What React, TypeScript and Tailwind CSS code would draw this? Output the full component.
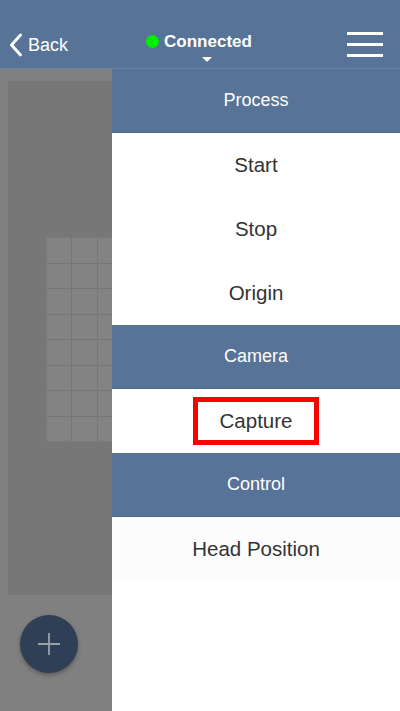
import React from 'react';

type Row = { label: string; kind: 'header' | 'item'; boxed?: boolean };

const rows: Row[] = [
  { label: 'Process', kind: 'header' },
  { label: 'Start', kind: 'item' },
  { label: 'Stop', kind: 'item' },
  { label: 'Origin', kind: 'item' },
  { label: 'Camera', kind: 'header' },
  { label: 'Capture', kind: 'item', boxed: true },
  { label: 'Control', kind: 'header' },
  { label: 'Head Position', kind: 'item' },
];

const font = { fontFamily: '"Liberation Sans", Arial, sans-serif' };

function TopBar() {
  return (
    <div className="h-[69px] bg-[#577397] border-b border-[#6a83a4] flex items-center text-white shrink-0">
      <div className="flex items-center w-[120px] pl-[9px] pt-[22px]">
        <svg width="14" height="24" viewBox="0 0 14 24" fill="none">
          <path d="M11.5 2 L2.5 12 L11.5 22" stroke="white" strokeWidth="3" strokeLinecap="round" strokeLinejoin="round" />
        </svg>
        <span className="ml-[5px] text-[18px] leading-none">Back</span>
      </div>
      <div className="flex-1 flex flex-col items-center pt-[27px] pr-[2px]">
        <div className="flex items-center">
          <span className="w-[13px] h-[13px] rounded-full bg-[#00ee00]" />
          <span className="ml-[5px] text-[17px] font-bold leading-none">Connected</span>
        </div>
        <svg className="mt-[7px] ml-[16px]" width="10" height="5" viewBox="0 0 10 5">
          <path d="M0 0 L10 0 L5 5 Z" fill="white" />
        </svg>
      </div>
      <div className="w-[120px] flex justify-end pr-[17px] pt-[20px]">
        <div className="flex flex-col gap-[8px]">
          <span className="block w-[36px] h-[3px] bg-white" />
          <span className="block w-[36px] h-[3px] bg-white" />
          <span className="block w-[36px] h-[3px] bg-white" />
        </div>
      </div>
    </div>
  );
}

function Canvas() {
  const cells = Array.from({ length: 24 });
  return (
    <div className="w-[112px] shrink-0 bg-[#808080] flex flex-col overflow-hidden">
      <div className="mt-[12px] ml-[8px] h-[514px] bg-[#777777] overflow-hidden">
        <div className="mt-[156px] ml-[38px] w-[77px] grid grid-cols-3 gap-px bg-[#767676] border border-[#7a7a7a]">
          {cells.map((_, i) => (
            <div key={i} className="h-[24.5px] bg-[#838383]" />
          ))}
        </div>
      </div>
      <div className="mt-[20px] ml-[20px] w-[58px] h-[58px] rounded-full bg-[#2e3f56] shadow-[0_2px_4px_rgba(0,0,0,0.3)] flex items-center justify-center">
        <svg width="24" height="24" viewBox="0 0 24 24">
          <path d="M12 1 V23 M1 12 H23" stroke="#9aa0a8" strokeWidth="1.8" />
        </svg>
      </div>
    </div>
  );
}

function Menu() {
  return (
    <div className="flex-1 bg-white flex flex-col">
      {rows.map((r) =>
        r.kind === 'header' ? (
          <div
            key={r.label}
            className="h-[64px] bg-[#577397] border-b border-[#4d6789] flex items-center justify-center text-white text-[18px]"
          >
            {r.label}
          </div>
        ) : (
          <div
            key={r.label}
            className={`h-[64px] flex items-center justify-center text-[#333333] text-[20.5px] ${
              r.label === 'Head Position' ? 'bg-[#fdfcfd]' : 'bg-white'
            }`}
          >
            {r.boxed ? (
              <span className="w-[126px] h-[48px] border-[5px] border-[#ff0000] flex items-center justify-center">
                {r.label}
              </span>
            ) : (
              r.label
            )}
          </div>
        )
      )}
    </div>
  );
}

export default function App() {
  return (
    <div className="w-[400px] h-[711px] flex flex-col overflow-hidden" style={font}>
      <TopBar />
      <div className="flex flex-1 min-h-0">
        <Canvas />
        <Menu />
      </div>
    </div>
  );
}
